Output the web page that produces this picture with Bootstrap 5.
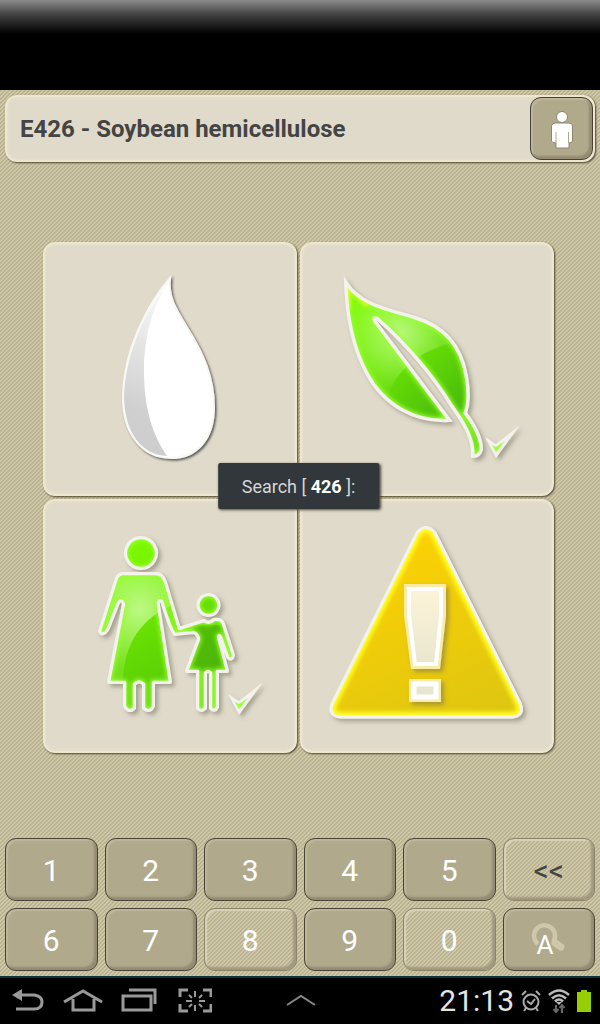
<!DOCTYPE html>
<html lang="en">
<head>
<meta charset="utf-8">
<meta name="viewport" content="width=device-width, initial-scale=1">
<title>E426 - Soybean hemicellulose</title>
<link rel="stylesheet" href="https://cdn.jsdelivr.net/npm/bootstrap@5.3.0/dist/css/bootstrap.min.css">
<script src="https://cdn.jsdelivr.net/npm/bootstrap@5.3.0/dist/js/bootstrap.bundle.min.js"></script>
<style>
  body { font-family: Roboto, "Liberation Sans", sans-serif; background: #000; }
  .top-band { height: 90px; background: linear-gradient(#8c8c8c, #444 14px, #000 34px); }
  .linen {
    background-color: #c6bea0;
    background-image: linear-gradient(135deg, #bab18f 25%, #d0c8aa 25% 50%, #bab18f 50% 75%, #d0c8aa 75%);
    background-size: 4px 4px;
  }
  .panel {
    background: #dfdaca;
    border: 2px solid #eee6cf;
    border-radius: 12px;
    box-shadow: 1px 1px 2px #4d4632, inset 0 0 3px #eee6cf;
  }
  .page-head { padding: 5px 5px 0; }
  .title-bar { height: 67px; padding: 0 0 0 13px; }
  .title-bar h1 { font-size: 24px; line-height: 32px; color: #444; }
  .key {
    height: 63px;
    padding: 2px 0 0;
    font-size: 30px;
    line-height: 32px;
    color: #fff;
    background: #b1a98c;
    border: 1px solid #484234;
    border-radius: 11px;
    box-shadow: inset -3px -3px 2px #938b72, inset 2px 2px 1px #beb69b;
  }
  .key:hover, .key:active { background: #a79f82 !important; color: #fff !important; border-color: #484234 !important; }
  .key-person { width: 63px; }
  .key-clear, .key-clear:disabled {
    background: transparent;
    border-color: #8c836a;
    color: #fff;
    opacity: 1;
    box-shadow: inset -3px -3px 2px #a29a80, inset 2px 2px 1px #d9d2b9;
  }
  .key-back { color: #444; }
  .keypad { display: grid; grid-template-columns: repeat(6, 1fr); gap: 7px; padding: 0 5px 5px; }
  .stage { padding: 0 3px 5px 0; }
  .tiles { width: 86%; max-width: 511px; display: grid; grid-template-columns: 1fr 1fr; gap: 3px; }
  .tiles .panel { aspect-ratio: 1; }
  .tiles svg { display: block; width: 100%; height: 100%; }
  .search-tip {
    padding: 9px 24px 7px;
    margin-top: -12px;
    font-size: 18px;
    line-height: 30px;
    white-space: nowrap;
    color: #d6d6d6;
    background: #31373b;
    border-radius: 2px;
    box-shadow: 1px 1px 3px #4d4632;
  }
  .search-tip b { color: #fff; }
  .system-bar { height: 48px; border-top: 2px solid #0b3440; background: #000; padding: 0 9px 0 10px; }
  .system-bar button { border: 0; padding: 0; background: none; line-height: 0; }
  .system-bar svg { display: block; }
  .bar-side { flex: 1 1 0; }
  .status { gap: 7px; }
  .clock { font-size: 30px; line-height: 36px; color: #e4e4e4; }
</style>
</head>
<body>
<div class="d-flex flex-column min-vh-100">
  <div class="top-band"></div>

  <div class="linen flex-grow-1 d-flex flex-column">
    <header class="page-head">
      <div class="panel title-bar d-flex align-items-center justify-content-between">
        <h1 class="fw-bold m-0">E426 - Soybean hemicellulose</h1>
        <button type="button" class="btn key key-person" aria-label="Profile">
          <svg width="26" height="40" viewBox="0 0 26 40">
            <g fill="#fff" stroke="#8e866e">
              <circle cx="13" cy="7" r="5.500"/>
              <path d="M6 13H20Q23.500 13 23.500 16V31Q23 33 20 33V38H7V33Q3 33 2.500 31V16Q3 13 6 13Z"/>
            </g>
            <path d="M7 22V33M19.500 22V33" stroke="#b1a98c"/>
          </svg>
        </button>
      </div>
    </header>

    <main class="stage flex-grow-1 d-flex align-items-center justify-content-center">
      <div class="tiles position-relative">
        <div class="panel">
          <svg viewBox="45 245 250 250" role="img" aria-label="Drop">
            <defs>
              <filter id="shade" x="-20%" y="-20%" width="140%" height="140%"><feDropShadow dx="3" dy="3" stdDeviation="2" flood-color="#6e6754" flood-opacity=".5"/></filter>
              <filter id="shadeDark" x="-20%" y="-20%" width="140%" height="140%"><feDropShadow dx="1.500" dy="1.500" stdDeviation="1" flood-color="#333" flood-opacity=".8"/></filter>
              <filter id="soft"><feGaussianBlur stdDeviation="2"/></filter>
              <linearGradient id="silver" x1="0.600" y1="0" x2="0.500" y2="1"><stop offset="0" stop-color="#fafafa"/><stop offset=".75" stop-color="#d0d0d0"/><stop offset="1" stop-color="#cdcdcd"/></linearGradient>
            </defs>
            <path filter="url(#shadeDark)" fill="#fff" stroke="#f8f8f2" stroke-width="2" d="M170 279C168 298 175 309 188 330C203 354 214 378 214 408C214 440 197 459 171 459C142 459 122 434 123 396C124 350 149 303 170 279Z"/>
            <path fill="url(#silver)" d="M169 283C151 310 144 339 144 372C144 412 154 438 167 457C142 456 124 434 124 396C126 350 149 306 169 283Z"/>
          </svg>
        </div>

        <div class="panel">
          <svg viewBox="302 245 250 250" role="img" aria-label="Plant origin">
            <defs>
              <linearGradient id="leafFill" gradientUnits="userSpaceOnUse" x1="350" y1="290" x2="455" y2="420"><stop offset="0" stop-color="#80ff00"/><stop offset=".5" stop-color="#6ae304"/><stop offset="1" stop-color="#48b80c"/></linearGradient>
              <radialGradient id="gloss" gradientUnits="userSpaceOnUse" cx="400" cy="335" r="55"><stop offset="0" stop-color="#d8ffb0" stop-opacity=".7"/><stop offset="1" stop-color="#c0ff80" stop-opacity=".1"/></radialGradient>
              <path id="leaf" d="M346 284C361 307 390 311 415 319C446 328 461 348 466 377C469 393 469 404 465 414C474 426 481 438 481 450C480 455 477 457 473 457C474 440 465 425 452 407C435 379 407 345 377 319Q372 318 375 323L449 421C415 423 384 406 367 374C352 346 347 316 346 284Z"/>
              <clipPath id="leafClip"><use href="#leaf"/></clipPath>
            </defs>
            <use href="#leaf" fill="#f4f2ec" stroke="#f4f2ec" stroke-width="4" filter="url(#shade)"/>
            <g clip-path="url(#leafClip)">
              <use href="#leaf" fill="url(#leafFill)"/>
              <path fill="url(#gloss)" d="M340 270H480V341C430 342 397 365 386 402L340 405Z"/>
              <use href="#leaf" fill="none" stroke="#98ff30" stroke-width="6" filter="url(#soft)"/>
              <path d="M347 310V284L368 306" fill="none" stroke="#eaff20" stroke-width="5" filter="url(#soft)"/>
            </g>
            <use href="#leaf" fill="none" stroke="#f4f2ec" stroke-width="3"/>
            <g id="tick" filter="url(#shade)"><path fill="#f4f2ec" d="M485 438L496 445L520 426L496 459Z"/><path fill="#9cff38" d="M492 446L496 448L505 442L496 453Z"/></g>
          </svg>
        </div>

        <div class="panel">
          <svg viewBox="45 502 250 250" role="img" aria-label="Safe for mother and child">
            <defs>
              <linearGradient id="famFill" gradientUnits="userSpaceOnUse" x1="110" y1="540" x2="200" y2="720"><stop offset="0" stop-color="#80ff00"/><stop offset=".6" stop-color="#62d804"/><stop offset="1" stop-color="#50c010"/></linearGradient>
              <radialGradient id="famGloss" gradientUnits="userSpaceOnUse" cx="140" cy="610" r="65"><stop offset="0" stop-color="#d8ffb0" stop-opacity=".75"/><stop offset="1" stop-color="#c0ff80" stop-opacity=".2"/></radialGradient>
              <path id="family" d="M141 539A15 15 0 1 1 140.900 539ZM208.500 596A10 10 0 1 1 208.400 596ZM123 575H156Q162 575 165 583L179 630L204 622Q209 626 214 621Q221 620 223 625L233 656Q232 662 228 658L221 638Q219 634 218 638L227 672H217V708Q215 713 211 709V674Q208 670 205 674V709Q201 713 198 709V672H187L199 640Q198 634 193 633L175 635Q171 631 162 602Q157 599 158 606L170 683H153V707Q150 714 144 709V685Q139 680 134 685V709Q129 714 125 707V683H109L124 605Q121 597 117 606L108 629Q103 638 100 632L116 582Q118 575 123 575Z"/>
              <clipPath id="familyClip"><use href="#family"/></clipPath>
            </defs>
            <use href="#family" fill="#f4f2ec" stroke="#f4f2ec" stroke-width="4" stroke-linejoin="round" filter="url(#shade)"/>
            <g clip-path="url(#familyClip)">
              <use href="#family" fill="url(#famFill)"/>
              <path fill="#3f9e08" fill-opacity=".45" d="M193 626H225V672H187Z"/>
              <path fill="url(#famGloss)" d="M95 570H175V605C142 618 123 645 123 684H95Z"/>
              <use href="#family" fill="none" stroke="#98ff30" stroke-width="5" filter="url(#soft)"/>
            </g>
            <use href="#family" fill="none" stroke="#f4f2ec" stroke-width="2.500" stroke-linejoin="round"/>
            <use href="#tick" x="-257" y="257"/>
          </svg>
        </div>

        <div class="panel">
          <svg viewBox="302 502 250 250" role="img" aria-label="Warning">
            <defs>
              <linearGradient id="warnFill" gradientUnits="userSpaceOnUse" x1="390" y1="550" x2="470" y2="720"><stop offset="0" stop-color="#fbd104"/><stop offset="1" stop-color="#dfc610"/></linearGradient>
              <linearGradient id="markFill" x1="0" y1="0" x2="0" y2="1"><stop offset="0" stop-color="#fcf4d8"/><stop offset="1" stop-color="#e9e6cf"/></linearGradient>
              <path id="warn" d="M417 534Q426 523 435 534L520 704Q525 717 512 718H341Q328 717 332 705Z"/>
              <clipPath id="warnClip"><use href="#warn"/></clipPath>
            </defs>
            <use href="#warn" fill="#f4f2ec" stroke="#f4f2ec" stroke-width="3" filter="url(#shade)"/>
            <g clip-path="url(#warnClip)">
              <use href="#warn" fill="url(#warnFill)"/>
              <use href="#warn" fill="none" stroke="#ffff28" stroke-width="10" filter="url(#soft)"/>
            </g>
            <use href="#warn" fill="none" stroke="#f4f2ec" stroke-width="3"/>
            <g filter="url(#shade)"><path fill="#f7eca8" d="M404 585H446V617L440 670H411L404 617ZM409 680H441V703H409Z"/></g>
            <path fill="url(#markFill)" stroke="#fff" stroke-width="4" d="M409 590H441V616L436 665H415L409 616Z"/>
            <path fill="#e9e6cf" stroke="#fff" stroke-width="5" d="M414 685H436V698H414Z"/>
          </svg>
        </div>

        <div class="search-tip position-absolute top-50 start-50 translate-middle" role="status">Search [ <b>426</b> ]:</div>
      </div>
    </main>

    <div class="keypad">
      <button type="button" class="btn key">1</button>
      <button type="button" class="btn key">2</button>
      <button type="button" class="btn key">3</button>
      <button type="button" class="btn key">4</button>
      <button type="button" class="btn key">5</button>
      <button type="button" class="btn key key-clear key-back">&lt;&lt;</button>
      <button type="button" class="btn key">6</button>
      <button type="button" class="btn key">7</button>
      <button type="button" class="btn key key-clear" disabled>8</button>
      <button type="button" class="btn key">9</button>
      <button type="button" class="btn key key-clear" disabled>0</button>
      <button type="button" class="btn key" aria-label="Search by letters">
        <svg width="40" height="40" viewBox="0 0 40 40">
          <path d="M9 23A10.500 10.500 0 1 1 24 21" fill="none" stroke="#cfc7aa" stroke-width="4.500"/>
          <path d="M26 22L32 26" stroke="#cfc7aa" stroke-width="7" stroke-linecap="round"/>
          <text x="16" y="33" text-anchor="middle" font-size="26" fill="#fff">A</text>
        </svg>
      </button>
    </div>
  </div>

  <footer class="system-bar d-flex align-items-center">
    <div class="bar-side d-flex align-items-center gap-3">
      <button type="button" aria-label="Back"><svg width="36" height="28" viewBox="0 0 36 28"><path d="M2 8L12 2V14Z" fill="#999"/><path d="M11 8H24Q32 9 32 15Q32 22 24 22H6" fill="none" stroke="#999" stroke-width="3"/></svg></button>
      <button type="button" aria-label="Home"><svg width="42" height="28" viewBox="0 0 42 28"><path d="M2 15L21 4L40 15M11 12V23H32V12" fill="none" stroke="#999" stroke-width="3"/></svg></button>
      <button type="button" aria-label="Recent apps"><svg width="38" height="28" viewBox="0 0 38 28"><path d="M3 9H31V23H3ZM9 3H35V17" fill="none" stroke="#999" stroke-width="3"/></svg></button>
      <button type="button" class="ms-1" aria-label="Screenshot"><svg width="34" height="28" viewBox="0 0 34 28" fill="none" stroke="#999"><path d="M2 10V3H10M25 3H33V10M33 17V24H25M10 24H2V17" stroke-width="3"/><path d="M17 4V10M17 18V24M8 14H14M21 14H27M11 8L14 11M24 8L21 11M11 20L14 17M24 20L21 17" stroke-width="2"/></svg></button>
    </div>
    <button type="button" aria-label="Expand"><svg width="30" height="20" viewBox="0 0 30 20"><path d="M1 14L15 5L29 14" fill="none" stroke="#888" stroke-width="2"/></svg></button>
    <div class="bar-side status d-flex align-items-center justify-content-end">
      <span class="clock">21:13</span>
      <svg width="20" height="22" viewBox="0 0 20 22" fill="none" stroke="#aaa" stroke-width="2"><circle cx="10" cy="12" r="7.500"/><path d="M6 11L10 14L14 9M1 5L5 1M15 1L19 5M5 18L3 21M15 18L17 21"/></svg>
      <svg width="22" height="24" viewBox="0 0 22 24" fill="none" stroke="#bbb" stroke-width="2.500"><path d="M1 6Q11 -3 21 6M4 9.500Q11 3 18 9.500M7 12.500Q11 8.500 15 12.500"/><path d="M8 13H14L11 16Z" fill="#bbb" stroke="none"/><path d="M8 16V23M5.500 20L8 23L10.500 20M14 24V16M11.500 19L14 16L16.500 19" stroke="#666" stroke-width="2"/></svg>
      <svg width="14" height="22" viewBox="0 0 14 22"><path d="M4 0H10V2H14V22H0V2H4Z" fill="#94cf04"/></svg>
    </div>
  </footer>
</div>
</body>
</html>
